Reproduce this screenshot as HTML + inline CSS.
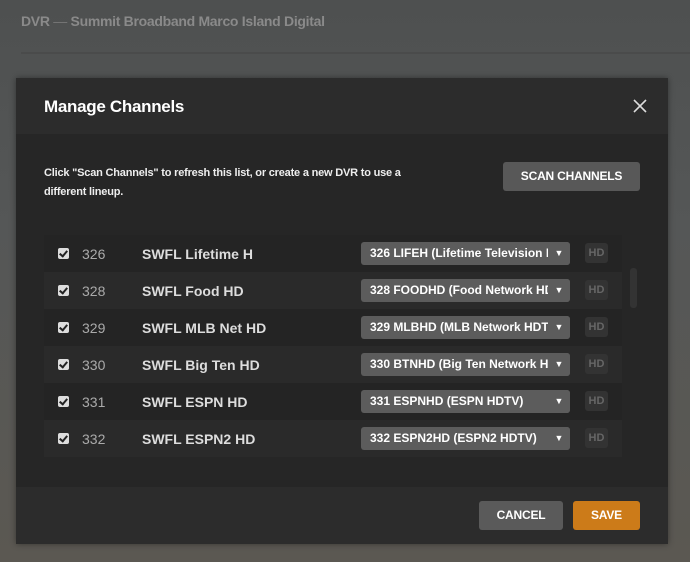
<!DOCTYPE html><html><head><style>
body{margin:0;width:690px;height:562px;overflow:hidden;font-family:"Liberation Sans",sans-serif;background:linear-gradient(#4e5050,#555757 40%,#5b5852);position:relative}
.t{position:absolute;left:21px;top:13px;font-size:14px;font-weight:bold;color:#8a8a8a;letter-spacing:-0.3px}
.line{position:absolute;left:21px;right:0;top:52px;height:2px;background:#4a4b4b}
.m{position:absolute;left:16px;top:78px;width:652px;height:466px;background:#262626;box-shadow:0 0 6px rgba(0,0,0,.4)}
.hd{height:56px;background:#2c2c2c;position:relative}
.hd h1{margin:0;position:absolute;left:28px;top:19px;font-size:17px;color:#fff;font-weight:bold;letter-spacing:-0.3px}
.x{position:absolute;left:617px;top:21px}
.desc{position:absolute;left:28px;top:86px;font-size:11px;font-weight:bold;color:#eee;line-height:19px;letter-spacing:-0.2px}
.btn{position:absolute;border-radius:3px;color:#fff;font-weight:bold;font-size:12px;text-align:center;letter-spacing:-0.2px}
.list{position:absolute;left:28px;top:157px;width:578px;height:222px;overflow:hidden}
.r{height:37px;position:relative;background:#242424}
.r:nth-child(even){background:#2a2a2a}
.cb{position:absolute;left:14px;top:13px;width:11px;height:11px;background:#ddd;border-radius:2px}
.cb:after{content:"";position:absolute;left:3px;top:1px;width:3px;height:6px;border:solid #222;border-width:0 2px 2px 0;transform:rotate(40deg)}
.n{position:absolute;left:38px;top:11px;font-size:14px;color:#aaa}
.nm{position:absolute;left:98px;top:11px;font-size:14px;color:#ddd;font-weight:bold}
.dd{position:absolute;left:317px;top:7px;width:209px;height:23px;background:#5c5c5c;border-radius:3px;color:#fff;font-size:12px;font-weight:bold;line-height:23px;padding-left:9px;box-sizing:border-box;white-space:nowrap;overflow:hidden}
.dd span{position:absolute;right:0;top:0;width:22px;height:23px;background:#5c5c5c;text-align:center;font-size:9px}
.b{position:absolute;left:541px;top:8px;width:23px;height:20px;background:#333;color:#666;font-size:11px;font-weight:bold;line-height:20px;text-align:center;border-radius:3px}
.sb{position:absolute;left:614px;top:190px;width:7px;height:40px;background:#333;border-radius:3px}
.ft{position:absolute;left:0;bottom:0;width:652px;height:57px;background:#2c2c2c}
</style></head><body>
<div class="t">DVR <span style="font-weight:normal;color:#777">—</span> Summit Broadband Marco Island Digital</div>
<div class="line"></div>
<div class="m">
<div class="hd"><h1>Manage Channels</h1><svg class="x" width="14" height="14" viewBox="0 0 14 14"><path d="M1 1L13 13M13 1L1 13" stroke="#ddd" stroke-width="1.6"/></svg></div>
<div class="desc">Click "Scan Channels" to refresh this list, or create a new DVR to use a<br>different lineup.</div>
<div class="btn" style="left:487px;top:84px;width:137px;height:29px;line-height:29px;background:#585858">SCAN CHANNELS</div>
<div class="list">
<div class="r"><div class="cb"></div><div class="n">326</div><div class="nm">SWFL Lifetime H</div><div class="dd">326 LIFEH (Lifetime Television HD)<span>▼</span></div><div class="b">HD</div></div>
<div class="r"><div class="cb"></div><div class="n">328</div><div class="nm">SWFL Food HD</div><div class="dd">328 FOODHD (Food Network HD)<span>▼</span></div><div class="b">HD</div></div>
<div class="r"><div class="cb"></div><div class="n">329</div><div class="nm">SWFL MLB Net HD</div><div class="dd">329 MLBHD (MLB Network HDTV)<span>▼</span></div><div class="b">HD</div></div>
<div class="r"><div class="cb"></div><div class="n">330</div><div class="nm">SWFL Big Ten HD</div><div class="dd">330 BTNHD (Big Ten Network HD)<span>▼</span></div><div class="b">HD</div></div>
<div class="r"><div class="cb"></div><div class="n">331</div><div class="nm">SWFL ESPN HD</div><div class="dd">331 ESPNHD (ESPN HDTV)<span>▼</span></div><div class="b">HD</div></div>
<div class="r"><div class="cb"></div><div class="n">332</div><div class="nm">SWFL ESPN2 HD</div><div class="dd">332 ESPN2HD (ESPN2 HDTV)<span>▼</span></div><div class="b">HD</div></div>
</div>
<div class="sb"></div>
<div class="ft">
<div class="btn" style="left:463px;top:14px;width:84px;height:29px;line-height:29px;background:#5a5a5a">CANCEL</div>
<div class="btn" style="left:557px;top:14px;width:67px;height:29px;line-height:29px;background:#cc7b19">SAVE</div>
</div>
</div>
</body></html>
